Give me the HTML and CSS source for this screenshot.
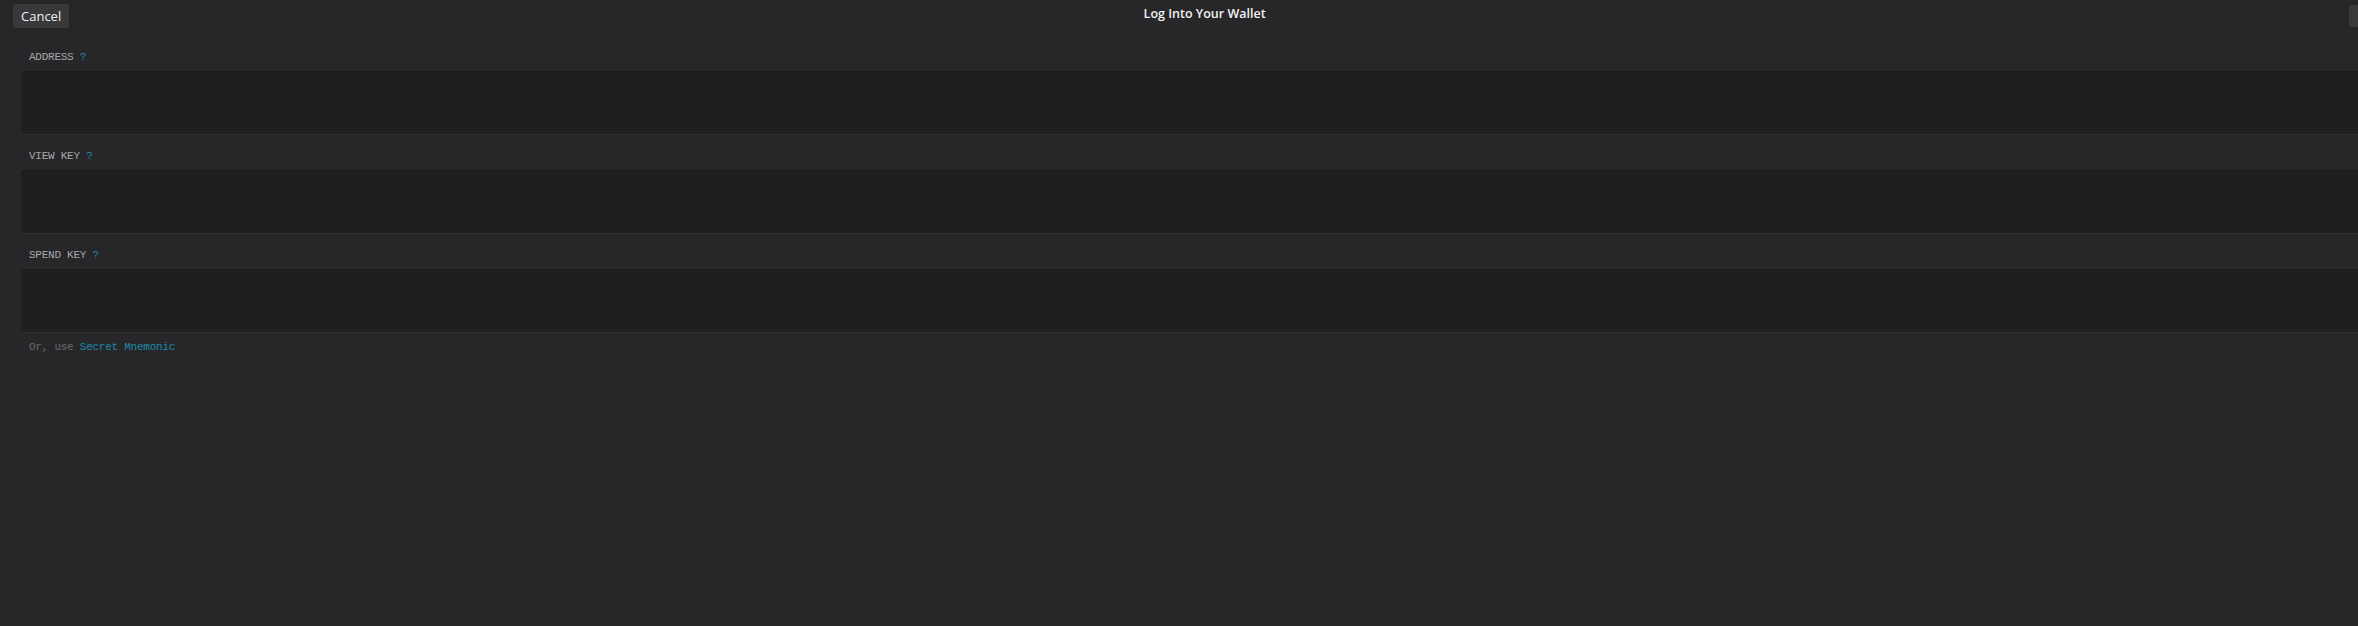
FILE: index.html
```html
<!DOCTYPE html>
<html>
<head>
    <title>Log Into Your Wallet</title>
    <link rel="stylesheet" href="styles.css">
</head>
<body>
    <div class="page">
        <div class="nav">
            <button class="nav-btn" type="button">Cancel</button>
            <div class="nav-title">Log Into Your Wallet</div>
            <button class="nav-btn nav-btn-right" type="button" aria-label="Next"></button>
        </div>
        <form class="login-form">
            <div class="field">
                <label class="field-label" for="address">ADDRESS <a class="help" href="#">?</a></label>
                <textarea class="field-input" id="address" rows="2"></textarea>
            </div>
            <div class="field">
                <label class="field-label" for="viewKey">VIEW KEY <a class="help" href="#">?</a></label>
                <textarea class="field-input" id="viewKey" rows="2"></textarea>
            </div>
            <div class="field">
                <label class="field-label" for="spendKey">SPEND KEY <a class="help" href="#">?</a></label>
                <textarea class="field-input" id="spendKey" rows="2"></textarea>
            </div>
            <div class="alt-login">Or, use <a class="link" href="#">Secret Mnemonic</a></div>
        </form>
    </div>
</body>
</html>
```

FILE: styles.css
```css
html, body { margin: 0; padding: 0; background-color: #272629; overflow: hidden; }
body { font-family: "Open Sans", sans-serif; color: #eeeeee; }
.page { width: calc(100vw + 46px); }

.nav { display: flex; align-items: flex-start; height: 32px; padding: 4px 0 0 13px; box-sizing: border-box; }
.nav-btn { height: 24px; padding: 0 8px; background-color: #39383b; color: #f0f0f0; border: none; border-radius: 3px; font-family: "Open Sans", sans-serif; font-size: 13px; line-height: 24px; cursor: pointer; }
.nav-btn-right { margin-left: 9px; width: 55px; margin-top: 1px; height: 22px; }
.nav-title { flex: 1; text-align: center; font-size: 12.5px; font-weight: 600; line-height: 20px; color: #f2f2f2; }

.login-form { padding: 18px 0 0 21px; }
.field { margin-bottom: 15px; }
.field-label { display: block; padding-left: 8px; margin-bottom: 7px; font-family: "Liberation Mono", monospace; font-size: 11px; line-height: 14px; letter-spacing: -0.25px; color: #a8a8aa; }
.help { color: #1d8aa8; text-decoration: none; }
.field-input { display: block; width: 100%; height: 63px; box-sizing: border-box; margin: 0; padding: 10px 8px; background-color: #1f1e21; border: none; border-top: 1px solid #1c1b1e; border-radius: 3px; box-shadow: 0 1px 0 #2f2e31; color: #dddddd; resize: none; outline: none; font-family: "Liberation Mono", monospace; font-size: 11px; }

.alt-login { margin-top: -7px; padding-left: 8px; font-family: "Liberation Mono", monospace; font-size: 11px; line-height: 14px; letter-spacing: -0.25px; color: #6e6d70; }
.link { color: #1d8aa8; text-decoration: none; }
```
